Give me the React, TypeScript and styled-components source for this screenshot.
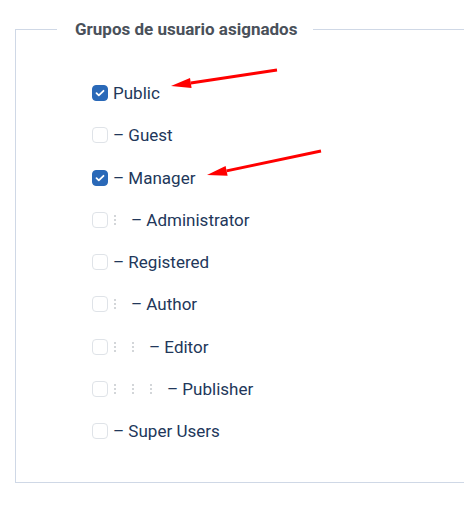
import React from 'react';
import styled, { createGlobalStyle } from 'styled-components';

const GlobalStyle = createGlobalStyle`
  html, body {
    margin: 0;
    padding: 0;
    background: #ffffff;
    overflow: hidden;
  }
  body {
    font-family: Roboto, "Liberation Sans", Arial, sans-serif;
  }
`;

const Page = styled.div`
  position: relative;
  width: 464px;
  height: 506px;
  padding-top: 17px;
  box-sizing: border-box;
  overflow: hidden;
`;

const Fieldset = styled.fieldset`
  margin: 0 0 0 15px;
  padding: 0 0 30px 0;
  width: 470px;
  border: 1px solid #cfd8e6;
  box-sizing: border-box;
`;

const Legend = styled.legend`
  margin-left: 41px;
  padding: 0 16px 0 18px;
  font-size: 17px;
  line-height: 24px;
  font-weight: 700;
  color: #4a515a;
`;

const List = styled.div`
  display: grid;
  grid-auto-rows: 42.25px;
  padding: 31px 0 0 76px;
`;

const Row = styled.label`
  display: flex;
  align-items: center;
  gap: 5px;
  font-size: 17px;
  color: #22375a;
`;

const Box = styled.span<{ $checked: boolean }>`
  flex: none;
  width: 16px;
  height: 16px;
  box-sizing: border-box;
  border-radius: 4px;
  display: flex;
  align-items: center;
  justify-content: center;
  background: ${(p) => (p.$checked ? '#2a69b8' : '#ffffff')};
  border: 1px solid ${(p) => (p.$checked ? '#2a69b8' : '#dfe3e8')};
`;

const Indent = styled.span`
  flex: none;
  width: 18px;
  height: 12px;
  margin-right: -5px;
  display: flex;
  align-items: center;
  padding-left: 1px;
  box-sizing: border-box;
`;

const Label = styled.span`
  white-space: nowrap;
`;

const Arrows = styled.svg`
  position: absolute;
  left: 0;
  top: 0;
  pointer-events: none;
`;

const groups = [
  { name: 'Public', level: 0, checked: true },
  { name: 'Guest', level: 1, checked: false },
  { name: 'Manager', level: 1, checked: true },
  { name: 'Administrator', level: 2, checked: false },
  { name: 'Registered', level: 1, checked: false },
  { name: 'Author', level: 2, checked: false },
  { name: 'Editor', level: 3, checked: false },
  { name: 'Publisher', level: 4, checked: false },
  { name: 'Super Users', level: 1, checked: false },
];

const Check = () => (
  <svg width="10" height="8" viewBox="0 0 10 8">
    <path d="M1.5 4.2 L3.8 6.3 L8.5 1.8" fill="none" stroke="#fff" strokeWidth="1.8" strokeLinecap="round" strokeLinejoin="round" />
  </svg>
);

const Dots = () => (
  <svg width="2" height="12" viewBox="0 0 2 12">
    <circle cx="1" cy="2" r="1" fill="#c4c8cc" />
    <circle cx="1" cy="6" r="1" fill="#c4c8cc" />
    <circle cx="1" cy="10" r="1" fill="#c4c8cc" />
  </svg>
);

const App: React.FC = () => {
  return (
    <Page>
      <GlobalStyle />
      <Fieldset>
        <Legend>Grupos de usuario asignados</Legend>
        <List>
          {groups.map((g) => (
            <Row key={g.name}>
              <Box $checked={g.checked}>{g.checked && <Check />}</Box>
              {Array.from({ length: Math.max(0, g.level - 1) }).map((_, i) => (
                <Indent key={i}>
                  <Dots />
                </Indent>
              ))}
              <Label>{g.level > 0 ? `– ${g.name}` : g.name}</Label>
            </Row>
          ))}
        </List>
      </Fieldset>
      <Arrows width="464" height="506" viewBox="0 0 464 506">
        <line x1="277" y1="70" x2="190.8" y2="83" stroke="#f00" strokeWidth="3" />
        <polygon points="171,86 190,78.1 191.6,87.9" fill="#f00" />
        <line x1="321" y1="151" x2="226.6" y2="170.9" stroke="#f00" strokeWidth="3" />
        <polygon points="207,175 225.6,166 227.6,175.8" fill="#f00" />
      </Arrows>
    </Page>
  );
};

export default App;
